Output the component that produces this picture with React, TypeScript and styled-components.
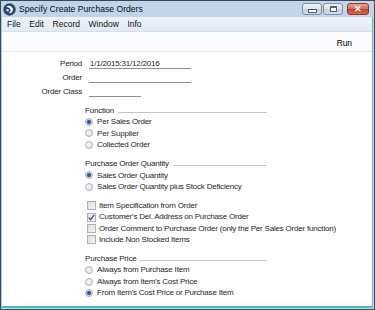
import React from 'react'
import styled, { createGlobalStyle } from 'styled-components'

const GlobalStyle = createGlobalStyle`
    html, body {
        margin: 0;
        padding: 0;
        background: #ffffff;
    }
    body {
        font-family: 'Liberation Sans', Arial, sans-serif;
        color: #000000;
    }
`

const Home = () => {
    return (
        <Window>
            <GlobalStyle />
            <TitleBar>
                <AppIcon />
                <Title>Specify Create Purchase Orders</Title>
                <Controls>
                    <CtrlButton>
                        <MinGlyph />
                    </CtrlButton>
                    <CtrlButton>
                        <MaxGlyph />
                    </CtrlButton>
                    <CloseButton>
                        <CloseGlyph />
                    </CloseButton>
                </Controls>
            </TitleBar>

            <Body>
                <MenuBar>
                    <MenuItem>File</MenuItem>
                    <MenuItem>Edit</MenuItem>
                    <MenuItem>Record</MenuItem>
                    <MenuItem>Window</MenuItem>
                    <MenuItem>Info</MenuItem>
                </MenuBar>

                <Toolbar>
                    <RunButton>Run</RunButton>
                </Toolbar>

                <Content>
                    <Fields>
                        <Label>Period</Label>
                        <Field $width={102}>1/1/2015:31/12/2016</Field>
                        <Label>Order</Label>
                        <Field $width={102} />
                        <Label>Order Class</Label>
                        <Field $width={52} />
                    </Fields>

                    <Sections>
                        <Section>
                            <SectionHead>
                                <SectionTitle>Function</SectionTitle>
                                <Rule />
                            </SectionHead>
                            <Option><Radio $on /><OptionText>Per Sales Order</OptionText></Option>
                            <Option><Radio /><OptionText>Per Supplier</OptionText></Option>
                            <Option><Radio /><OptionText>Collected Order</OptionText></Option>
                        </Section>

                        <Section>
                            <SectionHead>
                                <SectionTitle>Purchase Order Quantity</SectionTitle>
                                <Rule />
                            </SectionHead>
                            <Option><Radio $on /><OptionText>Sales Order Quantity</OptionText></Option>
                            <Option><Radio /><OptionText>Sales Order Quantity plus Stock Deficiency</OptionText></Option>
                        </Section>

                        <Section>
                            <Option><CheckBox /><CheckText>Item Specification from Order</CheckText></Option>
                            <Option>
                                <CheckBox>
                                    <svg width="9" height="9" viewBox="0 0 9 9">
                                        <path d="M1.8 4.6 L3.6 6.6 L7.2 1.8" fill="none" stroke="#2a4676" strokeWidth="1.2" />
                                    </svg>
                                </CheckBox>
                                <CheckText>Customer's Del. Address on Purchase Order</CheckText>
                            </Option>
                            <Option><CheckBox /><CheckText>Order Comment to Purchase Order (only the Per Sales Order function)</CheckText></Option>
                            <Option><CheckBox /><CheckText>Include Non Stocked Items</CheckText></Option>
                        </Section>

                        <Section>
                            <SectionHead>
                                <SectionTitle>Purchase Price</SectionTitle>
                                <Rule />
                            </SectionHead>
                            <Option><Radio /><OptionText>Always from Purchase Item</OptionText></Option>
                            <Option><Radio /><OptionText>Always from Item's Cost Price</OptionText></Option>
                            <Option><Radio $on /><OptionText>From Item's Cost Price or Purchase Item</OptionText></Option>
                        </Section>
                    </Sections>
                </Content>
            </Body>
        </Window>
    )
}

const AppIcon = () => (
    <IconWrap>
        <svg width="13" height="13" viewBox="0 0 12 12">
            <circle cx="6" cy="6" r="5.7" fill="#27456f" />
            <path d="M3 3.2 C5.5 1.6 9 3 9.2 6 C9.3 8.4 7 9.8 5 9.4 C7 8.6 7.6 6.8 6.6 5.4 C5.8 4.2 4.2 3.8 3 3.2 Z" fill="#ffffff" />
            <circle cx="4.2" cy="6.6" r="1.1" fill="#dfe8f3" />
        </svg>
    </IconWrap>
)

export default Home

export const Window = styled.div`
        width: 375px;
        height: 310px;
        box-sizing: border-box;
        display: flex;
        flex-direction: column;
        background: linear-gradient(#c2d4e8, #cddcec);
        border: 1px solid #3a4857;
        overflow: hidden;
`
export const TitleBar = styled.div`
        height: 16px;
        display: flex;
        align-items: center;
        padding-left: 2px;
        flex-shrink: 0;
`
export const IconWrap = styled.div`
        width: 13px;
        height: 13px;
        display: flex;
`
export const Title = styled.div`
        margin-left: 3px;
        font-size: 8.6px;
        line-height: 16px;
        color: #0b0b0b;
        flex: 1;
`
export const Controls = styled.div`
        display: flex;
        align-items: flex-start;
        align-self: flex-start;
        margin-top: 2px;
        margin-right: 2px;
        gap: 1px;
`
export const CtrlButton = styled.div`
        width: 20px;
        height: 12px;
        box-sizing: border-box;
        border: 1px solid #7d8fa6;
        border-radius: 3px;
        background: linear-gradient(#eef3f8 0%, #d6e0eb 50%, #c2cfde 51%, #d3dde9 100%);
        display: flex;
        align-items: center;
        justify-content: center;
        & + & {
            margin-right: 3px;
        }
`
export const CloseButton = styled(CtrlButton)`
        width: 22px;
        border-color: #8a3a30;
        background: linear-gradient(#e9a191 0%, #d56a57 50%, #c2402c 51%, #d7684d 100%);
`
export const MinGlyph = styled.div`
        width: 7px;
        height: 2px;
        margin-top: 3px;
        background: #ffffff;
        border: 1px solid #4d5f78;
`
export const MaxGlyph = styled.div`
        width: 5px;
        height: 3px;
        border: 1px solid #4d5f78;
        border-top-width: 2px;
        background: #ffffff;
`
export const CloseGlyph = styled.div`
        font-size: 9px;
        font-weight: bold;
        line-height: 9px;
        color: #ffffff;
        &::before {
            content: '✕';
        }
`
export const Body = styled.div`
        flex: 1;
        display: flex;
        flex-direction: column;
        margin: 0 1px 1px 0;
        border-left: 1px solid #a8c6de;
        border-right: 1px solid #67b4d8;
        border-bottom: 2px solid #4fb0d8;
        background: #ffffff;
`
export const MenuBar = styled.div`
        height: 14px;
        display: flex;
        align-items: center;
        padding-left: 5px;
        background: linear-gradient(#eef3f9, #e2eaf4);
        border-bottom: 1px solid #d5dfea;
`
export const MenuItem = styled.div`
        font-size: 8.5px;
        line-height: 14px;
        margin-right: 8.6px;
        color: #111111;
`
export const Toolbar = styled.div`
        height: 19px;
        display: flex;
        align-items: center;
        justify-content: flex-end;
        padding-right: 20px;
        background: #fbfcfd;
        border-bottom: 1px solid #e6e9ee;
`
export const RunButton = styled.div`
        font-size: 8.5px;
        letter-spacing: -0.1px;
        padding-top: 3px;
`
export const Content = styled.div`
        flex: 1;
        padding-top: 5px;
        font-size: 8px;
        letter-spacing: -0.2px;
        color: #262626;
`
export const Fields = styled.div`
        display: grid;
        grid-template-columns: 80px 1fr;
        column-gap: 7px;
        grid-auto-rows: 14px;
`
export const Label = styled.div`
        text-align: right;
        line-height: 14px;
`
export const Field = styled.div<{ $width: number }>`
        width: ${p => p.$width}px;
        height: 14px;
        line-height: 14px;
        padding-left: 1px;
        box-sizing: border-box;
        background: linear-gradient(#8e8e8e, #8e8e8e) no-repeat 0 11px / 100% 1px;
`
export const Sections = styled.div`
        margin-top: 6px;
        margin-left: 83px;
        width: 182px;
        display: flex;
        flex-direction: column;
        gap: 7.6px;
`
export const Section = styled.div`
        display: flex;
        flex-direction: column;
`
export const SectionHead = styled.div`
        height: 11.4px;
        display: flex;
        align-items: center;
`
export const SectionTitle = styled.div`
        line-height: 11.4px;
        white-space: nowrap;
`
export const Rule = styled.div`
        flex: 1;
        height: 1px;
        margin-left: 4px;
        margin-top: 3px;
        background: #c4c4c4;
`
export const Option = styled.div`
        height: 11.4px;
        display: flex;
        align-items: center;
        white-space: nowrap;
`
export const Radio = styled.div<{ $on?: boolean }>`
        width: 8px;
        height: 8px;
        box-sizing: border-box;
        border-radius: 50%;
        border: 1px solid #aeb2b8;
        background: ${p => p.$on
            ? 'radial-gradient(circle, #1f5fa8 0 1.5px, #6d9fd3 2.1px, #e2e7ee 2.8px)'
            : 'radial-gradient(circle at 40% 40%, #f7f7f7, #dadcdf)'};
        flex-shrink: 0;
`
export const OptionText = styled.span`
        margin-left: 4px;
        line-height: 11.4px;
`
export const CheckBox = styled.div`
        width: 9px;
        height: 9px;
        margin-left: 2px;
        box-sizing: border-box;
        border: 1px solid #adb0b5;
        background: linear-gradient(135deg, #dcdee1, #f4f5f6);
        display: flex;
        align-items: center;
        justify-content: center;
        flex-shrink: 0;
        svg {
            display: block;
            margin: -1px;
        }
`
export const CheckText = styled(OptionText)`
        margin-left: 3px;
`
